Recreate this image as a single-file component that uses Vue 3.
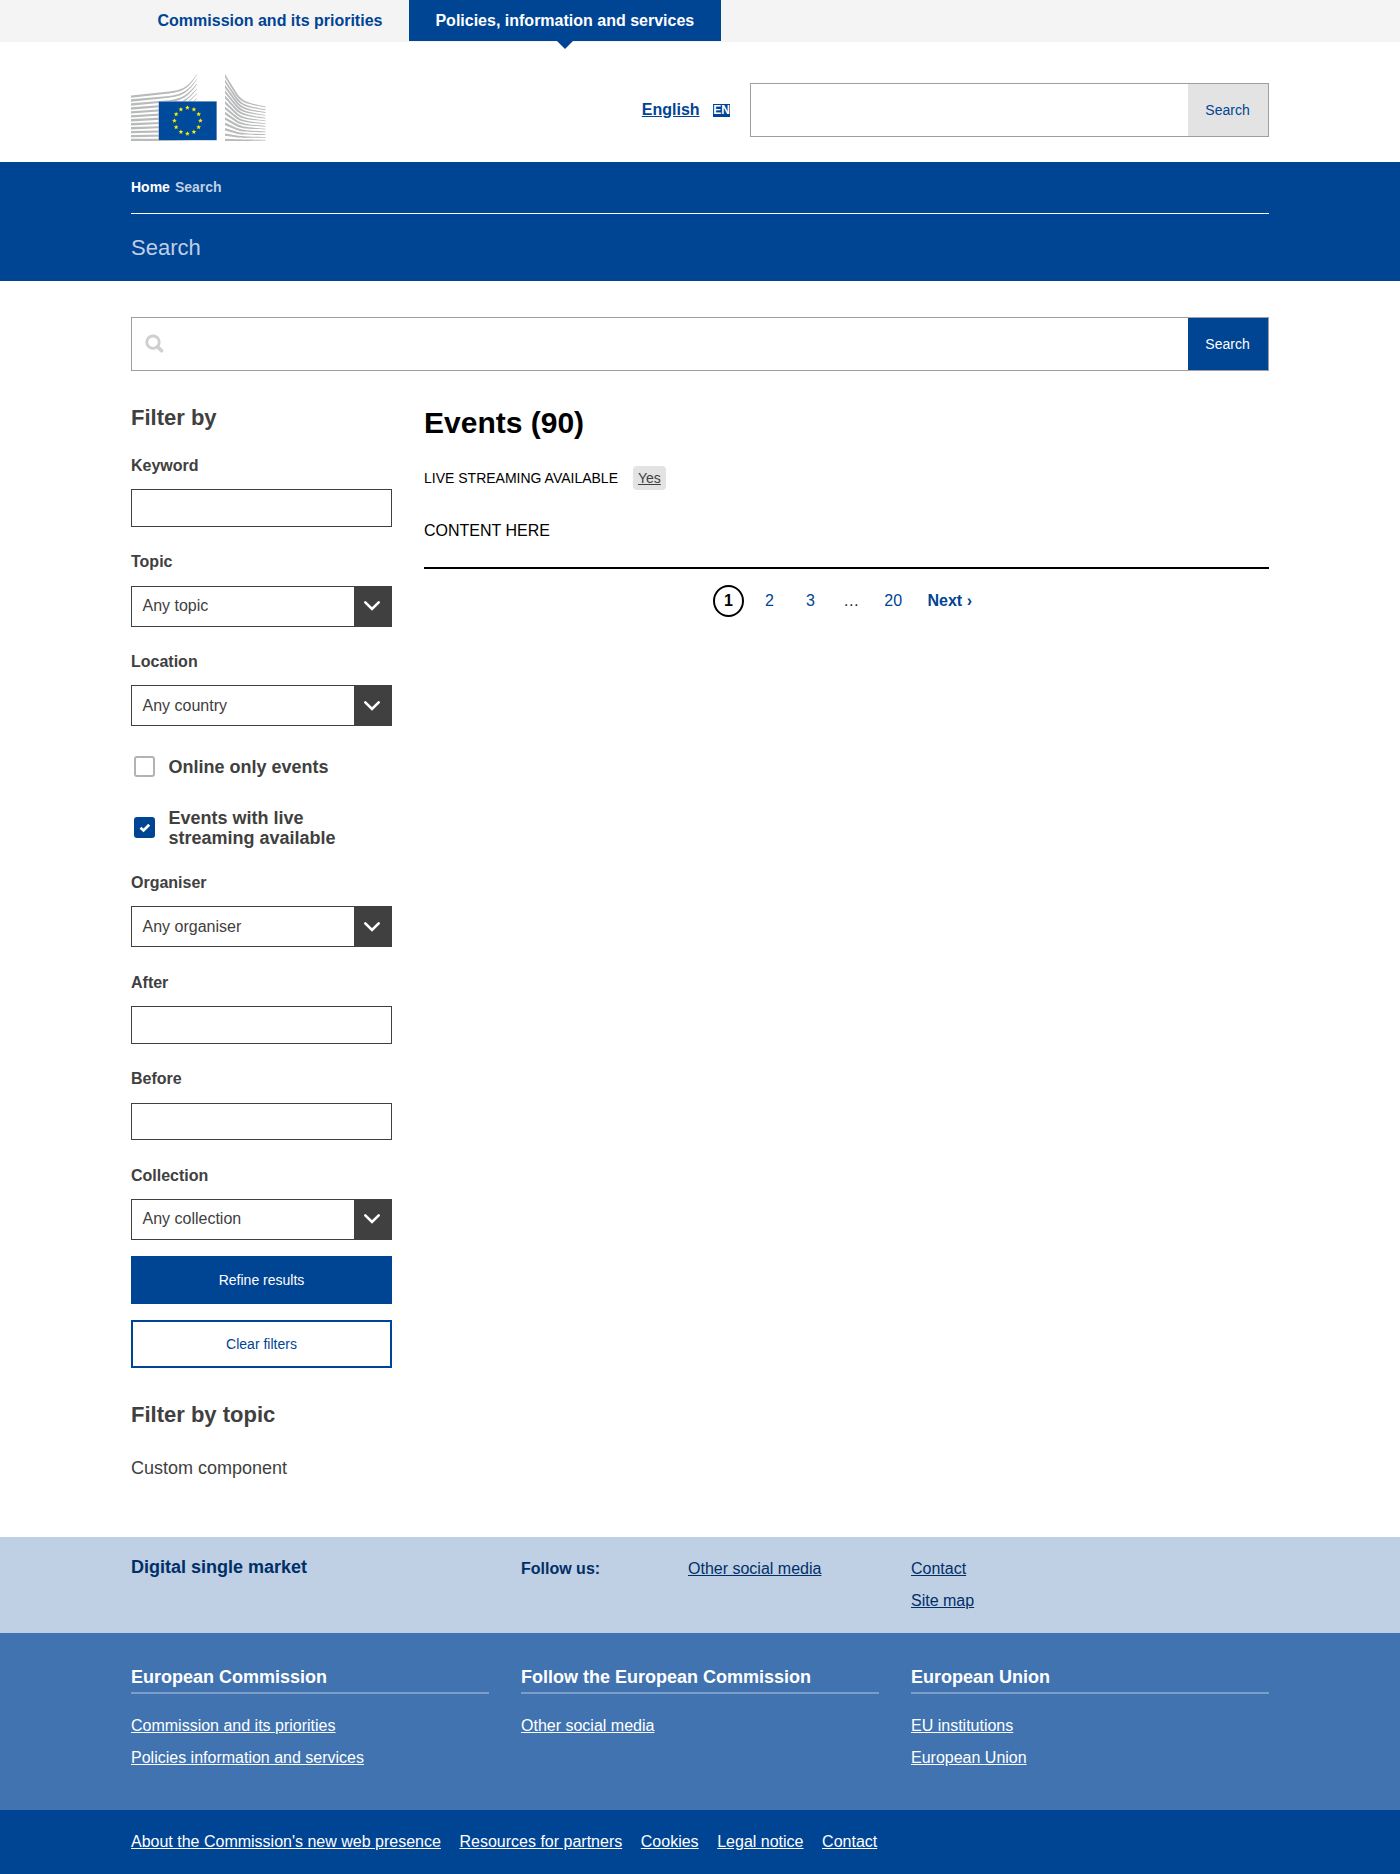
<script setup>
const fieldsTop = [
  { label: 'Keyword', type: 'input' },
  { label: 'Topic', type: 'select', value: 'Any topic' },
  { label: 'Location', type: 'select', value: 'Any country' },
]
const fieldsBottom = [
  { label: 'Organiser', type: 'select', value: 'Any organiser' },
  { label: 'After', type: 'input' },
  { label: 'Before', type: 'input' },
  { label: 'Collection', type: 'select', value: 'Any collection' },
]
const footerColumns = [
  { title: 'European Commission', links: ['Commission and its priorities', 'Policies information and services'] },
  { title: 'Follow the European Commission', links: ['Other social media'] },
  { title: 'European Union', links: ['EU institutions', 'European Union'] },
]
const legalLinks = ["About the Commission's new web presence", 'Resources for partners', 'Cookies', 'Legal notice', 'Contact']

// Tapered beams of the Berlaymont emblem, left wing
const leftBeams = Array.from({ length: 12 }, (_, i) => {
  const f = 1 - i / 11
  const y = 21.4 + i * 3.95
  const end = i < 11 ? i * 4.8 : 65.2
  const m = y - 3.8 * f
  const c = y - 5.6 * f
  return `M0 ${y} L38 ${m} C52 ${c} 57 ${end + 13 * f} 66 ${end} V${end + 0.8} C57 ${end + 14.6 * f + 0.8} 52 ${c + 1.8} 38 ${m + 1.9} L0 ${y + 2.4}Z`
})
// Right wing
const rightBeams = Array.from({ length: 13 }, (_, i) => {
  const f = 1 - i / 12
  const y = i * 5.4
  const end = 32.6 + i * 2.76
  const d = end - y
  return `M94 ${y} L106 ${y + d * 0.6} C111 ${y + d * 0.82} 116 ${end - 3.5 * f} 134.5 ${end} V${end + 0.8} C116 ${end - 3.5 * f + 1.2} 110 ${y + d * 0.82 + 2} 105 ${y + d * 0.6 + 1.8} L94 ${y + 2.3 + f}Z`
})
const stars = Array.from({ length: 12 }, (_, i) => {
  const a = (i * Math.PI) / 6
  const cx = 56.4 + 13 * Math.sin(a)
  const cy = 46.7 - 13 * Math.cos(a)
  return Array.from({ length: 10 }, (_, k) => {
    const r = k % 2 ? 1.05 : 2.5
    const b = (k * Math.PI) / 5
    return `${(cx + r * Math.sin(b)).toFixed(2)},${(cy - r * Math.cos(b)).toFixed(2)}`
  }).join(' ')
})
</script>

<template>
  <div class="page">
    <nav class="topbar">
      <div class="wrap tabs">
        <a class="tab">Commission and its priorities</a>
        <a class="tab active">Policies, information and services</a>
      </div>
    </nav>

    <header class="header">
      <div class="wrap header-row">
        <svg class="logo" viewBox="0 0 135 67" width="135" height="67">
          <g fill="#b9babb">
            <path v-for="(d, i) in leftBeams" :key="'l' + i" :d="d" />
            <path v-for="(d, i) in rightBeams" :key="'r' + i" :d="d" />
          </g>
          <rect x="27.4" y="27" width="58.4" height="39.4" fill="#8fa7cc" />
          <rect x="28" y="27.8" width="57.4" height="38.2" fill="#004a9c" />
          <polygon v-for="(p, i) in stars" :key="'s' + i" :points="p" fill="#ffec00" />
        </svg>
        <div class="header-right">
          <a class="lang">English</a>
          <span class="lang-code">EN</span>
          <div class="search-box">
            <div class="search-input"></div>
            <div class="search-btn grey">Search</div>
          </div>
        </div>
      </div>
    </header>

    <section class="banner">
      <div class="wrap">
        <div class="crumbs"><b>Home</b><b class="muted">Search</b></div>
        <div class="banner-title">Search</div>
      </div>
    </section>

    <main class="wrap main">
      <div class="search-box big">
        <div class="search-input">
          <svg width="20" height="20" viewBox="0 0 20 20" fill="none" stroke="#cfcfcf">
            <circle cx="8" cy="8.2" r="6.2" stroke-width="2.9" />
            <path d="M12.7 12.9L16.6 16.8" stroke-width="3.6" stroke-linecap="round" />
          </svg>
        </div>
        <div class="search-btn blue">Search</div>
      </div>

      <div class="columns">
        <aside class="side">
          <h2>Filter by</h2>
          <div v-for="f in fieldsTop" :key="f.label" class="field" :class="f.type">
            <label>{{ f.label }}</label>
            <div v-if="f.type === 'input'" class="text-input"></div>
            <div v-else class="select-box">
              <span>{{ f.value }}</span>
              <i><svg width="18" height="12" viewBox="0 0 18 12" fill="none" stroke="#fff" stroke-width="2.6" stroke-linecap="round"><path d="M2.3 2.4L9 9L15.7 2.4" /></svg></i>
            </div>
          </div>

          <div class="check first"><span class="box"></span><b>Online only events</b></div>
          <div class="check second">
            <span class="box on"><svg width="21" height="21" viewBox="0 0 21 21" fill="none" stroke="#fff" stroke-width="2.7"><path d="M6.5 10.8L9.5 13.4L15.2 7.8" /></svg></span>
            <b>Events with live streaming available</b>
          </div>

          <div v-for="f in fieldsBottom" :key="f.label" class="field" :class="f.type">
            <label>{{ f.label }}</label>
            <div v-if="f.type === 'input'" class="text-input"></div>
            <div v-else class="select-box">
              <span>{{ f.value }}</span>
              <i><svg width="18" height="12" viewBox="0 0 18 12" fill="none" stroke="#fff" stroke-width="2.6" stroke-linecap="round"><path d="M2.3 2.4L9 9L15.7 2.4" /></svg></i>
            </div>
          </div>
          <div class="btn primary">Refine results</div>
          <div class="btn outline">Clear filters</div>
          <h2 class="topic-title">Filter by topic</h2>
          <p class="custom">Custom component</p>
        </aside>

        <section class="results">
          <h1>Events (90)</h1>
          <div class="facet"><span>LIVE STREAMING AVAILABLE</span><a class="chip">Yes</a></div>
          <p class="content">CONTENT HERE</p>
          <nav class="pager">
            <span class="current">1</span>
            <a class="p2">2</a>
            <a class="p3">3</a>
            <span class="dots">…</span>
            <a class="p20">20</a>
            <a class="next">Next ›</a>
          </nav>
        </section>
      </div>
    </main>

    <footer>
      <div class="foot-site">
        <div class="wrap foot-grid">
          <h3>Digital single market</h3>
          <div class="follow"><b>Follow us:</b><a>Other social media</a></div>
          <div class="links"><a>Contact</a><a>Site map</a></div>
        </div>
      </div>
      <div class="foot-ec">
        <div class="wrap foot-grid">
          <div v-for="c in footerColumns" :key="c.title">
            <h3>{{ c.title }}</h3>
            <div class="links"><a v-for="l in c.links" :key="l">{{ l }}</a></div>
          </div>
        </div>
      </div>
      <div class="foot-legal">
        <div class="wrap legal"><a v-for="l in legalLinks" :key="l">{{ l }}</a></div>
      </div>
    </footer>
  </div>
</template>

<style>
body { margin: 0; background: #fff; }
</style>

<style scoped>
.page { font-family: "Liberation Sans", Arial, sans-serif; font-size: 16px; line-height: 24px; color: #404040; height: 1874px; display: flex; flex-direction: column; }
.page * { box-sizing: border-box; }
h1, h2, h3, p { margin: 0; }
.wrap { width: 1138px; margin: 0 auto; }

.topbar { height: 42px; background: #f4f4f4; flex: none; }
.tabs { display: flex; }
.tab { position: relative; height: 41px; padding: 0 26.5px; line-height: 41px; font-weight: bold; color: #004494; }
.tab.active { background: #004494; color: #fff; }
.tab.active::after { content: ""; position: absolute; left: 50%; top: 41px; margin-left: -8px; border: 8px solid transparent; border-top-color: #004494; border-bottom: 0; }

.header { height: 120px; flex: none; }
.header-row { display: flex; justify-content: space-between; align-items: flex-start; }
.logo { margin-top: 32px; display: block; }
.header-right { display: flex; align-items: center; margin-top: 41px; }
.lang { font-weight: bold; color: #004494; text-decoration: underline; }
.lang-code { width: 17px; height: 13px; margin: 0 20px 0 13.4px; background: #004494; color: #fff; font-size: 12px; font-weight: bold; line-height: 13px; display: flex; justify-content: center; }
.search-box { width: 519px; height: 54px; border: 1px solid #9f9f9f; display: flex; }
.search-input { flex: 1; display: flex; align-items: center; padding-left: 13px; }
.search-btn { width: 80px; font-size: 14px; line-height: 53px; text-align: center; padding-right: 1px; }
.grey { background: #e3e3e3; color: #004494; }
.blue { background: #004494; color: #fff; }

.banner { height: 119px; flex: none; background: #004494; color: #fff; }
.crumbs { height: 52px; border-bottom: 1px solid #fff; font-size: 14px; line-height: 50px; display: flex; gap: 5px; }
.muted { color: #bfd0e4; }
.banner-title { font-size: 22px; line-height: 68px; color: #bfd0e4; }

.main { flex: 1; padding-top: 36px; }
.search-box.big { width: 1138px; }
.columns { display: grid; grid-template-columns: 261px 845px; column-gap: 32px; }
.side { padding-top: 33px; }
h2 { font-size: 22px; line-height: 28px; }
.side > h2:first-child { margin-bottom: 21px; }
.field label { display: block; font-weight: bold; line-height: 26px; margin-bottom: 10.2px; }
.text-input { height: 37.5px; border: 1px solid #404040; margin-bottom: 22.8px; }
.select-box { height: 41px; border: 1px solid #404040; margin-bottom: 22.5px; display: flex; justify-content: space-between; padding-left: 10.5px; line-height: 38px; }
.select-box span { padding-top: .22px; }
.select-box i { width: 37px; background: #404040; display: flex; align-items: center; padding-left: 9px; }
.check { display: flex; align-items: center; padding-left: 3px; font-size: 18px; line-height: 20px; }
.check.first { margin-top: 29.6px; height: 21px; }
.check.first b { padding-top: 1px; }
.check.second { margin-top: 30px; height: 42px; margin-bottom: 21.2px; }
.box { width: 21px; height: 21px; margin-right: 13.5px; border: 2px solid #b3b3b3; border-radius: 3px; flex: none; }
.box.on { border: 0; background: #004494; display: flex; }
.check b { width: 200px; }
.btn { height: 48px; font-size: 14px; line-height: 48px; text-align: center; }
.primary { background: #004494; color: #fff; margin-top: -6.5px; }
.outline { border: 2px solid #004494; color: #004494; margin-top: 16px; line-height: 44px; }
.topic-title { margin-top: 33px; }
.custom { font-size: 18px; line-height: 24px; margin-top: 27px; }

.results { color: #000; padding-top: 34px; }
h1 { font-size: 30px; line-height: 36px; }
.facet { display: flex; align-items: center; font-size: 14px; height: 24px; margin-top: 25px; }
.chip { margin-left: 15px; background: #e3e3e3; color: #404040; border-radius: 4px; padding: 0 5px; line-height: 24px; text-decoration: underline; }
.content { margin-top: 29px; height: 50px; border-bottom: 2px solid #000; line-height: 24px; }
.pager { display: flex; align-items: center; margin: 16px 0 0 289px; height: 32px; color: #202020; }
.pager a { color: #004494; }
.current { width: 31px; height: 32px; border: 2px solid #000; border-radius: 50%; color: #000; font-weight: bold; text-align: center; line-height: 28px; }
.p2 { margin-left: 21px; }
.p3 { margin-left: 32px; }
.dots { margin-left: 28.5px; }
.p20 { margin-left: 25px; }
.pager .next { margin-left: 25.4px; font-weight: bold; }

footer { flex: none; }
footer a { text-decoration: underline; }
footer h3 { font-size: 18px; line-height: 24px; }
.foot-grid { display: grid; grid-template-columns: repeat(3, 358px); column-gap: 32px; }
.links { display: flex; flex-direction: column; align-items: flex-start; gap: 8px; }
.foot-site { height: 96px; background: #bfd0e4; color: #002f67; padding-top: 18px; }
.foot-site .follow { display: flex; padding-top: 2px; }
.foot-site .follow b { width: 167px; }
.foot-site .links { padding-top: 2px; }
.foot-ec { height: 177px; background: #4073af; color: #fff; padding-top: 32px; }
.foot-ec h3 { height: 29px; border-bottom: 2px solid #7b9dc8; margin-bottom: 20px; }
.foot-legal { height: 64px; background: #004494; color: #fff; padding-top: 20px; }
.legal { display: flex; gap: 18.6px; }
</style>
